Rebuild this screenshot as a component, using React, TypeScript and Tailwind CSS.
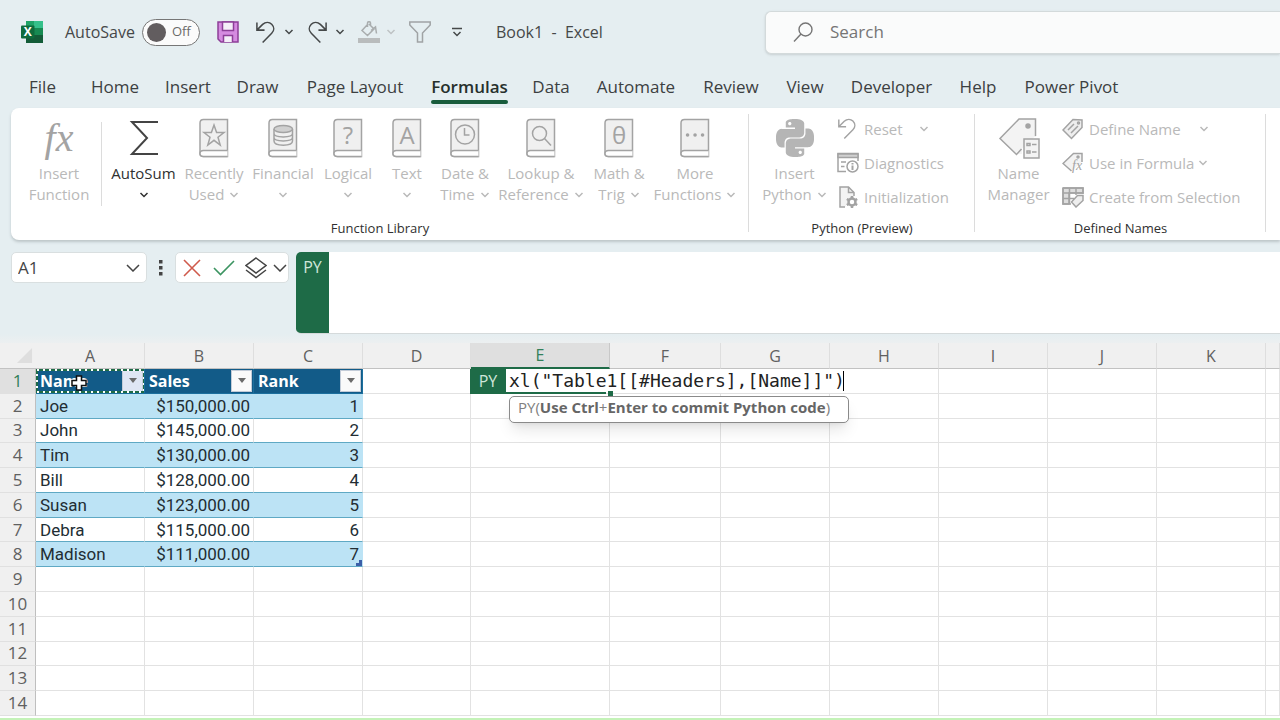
import { useState, type ReactNode } from "react";
import { SiPython } from "react-icons/si";

const tabs = [
  { name: "File", width: "w-[75px]" },
  { name: "Home", width: "w-[70px]" },
  { name: "Insert", width: "w-[76px]" },
  { name: "Draw", width: "w-[63px]" },
  { name: "Page Layout", width: "w-[132px]" },
  { name: "Formulas", width: "w-[97px]" },
  { name: "Data", width: "w-[66px]" },
  { name: "Automate", width: "w-[104px]" },
  { name: "Review", width: "w-[86px]" },
  { name: "View", width: "w-[62px]" },
  { name: "Developer", width: "w-[111px]" },
  { name: "Help", width: "w-[62px]" },
  { name: "Power Pivot", width: "w-[125px]" },
];

const columns = [
  { name: "A", width: "w-[109px]" },
  { name: "B", width: "w-[109px]" },
  { name: "C", width: "w-[109px]" },
  { name: "D", width: "w-[108px]" },
  { name: "E", width: "w-[139px]" },
  { name: "F", width: "w-[111px]" },
  { name: "G", width: "w-[109px]" },
  { name: "H", width: "w-[109px]" },
  { name: "I", width: "w-[109px]" },
  { name: "J", width: "w-[109px]" },
  { name: "K", width: "w-[109px]" },
  { name: "", width: "w-auto" },
];

const people = [
  ["Joe", "$150,000.00", "1"],
  ["John", "$145,000.00", "2"],
  ["Tim", "$130,000.00", "3"],
  ["Bill", "$128,000.00", "4"],
  ["Susan", "$123,000.00", "5"],
  ["Debra", "$115,000.00", "6"],
  ["Madison", "$111,000.00", "7"],
];

function Chevron({ className = "" }: { className?: string }) {
  return (
    <svg viewBox="0 0 10 6" className={`inline-block h-[6px] w-[10px] shrink-0 ${className}`}>
      <path d="M1.5 1l3.5 3.5L8.500 1" fill="none" stroke="currentColor" strokeWidth="1.5" />
    </svg>
  );
}

function Undo({ className = "" }: { className?: string }) {
  return (
    <svg viewBox="0 0 22 24" className={className} fill="none" stroke="currentColor" strokeWidth="1.6">
      <path d="M2 1.500V9.500H10M2.500 9L8 3.500C11 .8 15 .8 17.500 3.300C20.300 6.200 20.300 10 17.500 12.800L8 22.500" />
    </svg>
  );
}

function Book({ children }: { children?: ReactNode }) {
  return (
    <svg viewBox="0 0 30 40" className="h-10 w-[30px]" fill="none" stroke="#a3a3a3" strokeWidth="1.5">
      <path d="M4.500 1.500H28.500V38.500H4.500C2.500 38.500 1 37.500 1 35.500V5C1 3 2.500 1.500 4.500 1.500Z" fill="#f0f0f0" />
      <path d="M28.500 32.500H4.500C2.500 32.500 1 33.500 1 35.500S2.500 38.500 4.500 38.500H28.500" fill="#fff" />
      {children}
    </svg>
  );
}

function Glyph({ children }: { children: string }) {
  return (
    <text x="15" y="26" textAnchor="middle" fill="#a3a3a3" stroke="none" fontSize="24" fontFamily="Open Sans, sans-serif">
      {children}
    </text>
  );
}

type BigButtonProps = {
  icon: ReactNode;
  first: string;
  second?: string;
  menu?: boolean;
  width: string;
  color?: string;
};

function BigButton({ icon, first, second, menu, width, color = "text-[#b9b9b9]" }: BigButtonProps) {
  return (
    <button className={`flex shrink-0 flex-col items-center pt-[6px] text-[15px] leading-[21px] whitespace-nowrap ${width} ${color}`}>
      <span className="mb-[5px] flex h-10 items-center justify-center">{icon}</span>
      <span>{first}</span>
      <span className="flex h-[21px] items-center gap-[5px]">
        {second}
        {menu && <Chevron />}
      </span>
    </button>
  );
}

function SmallButton({ icon, label, menu }: { icon: ReactNode; label: string; menu?: string }) {
  return (
    <button className="flex h-[34px] items-center gap-1 text-[15px] whitespace-nowrap text-[#b9b9b9]">
      <span className="flex w-[23px]">{icon}</span>
      {label}
      {menu && <Chevron className={menu} />}
    </button>
  );
}

function Group({ caption, children, width }: { caption: string; children: ReactNode; width: string }) {
  return (
    <section className={`relative flex shrink-0 flex-col ${width}`} aria-label={caption}>
      <div className="flex h-[106px]">{children}</div>
      <h2 className="text-center text-[13px] leading-5 text-[#303030]">{caption}</h2>
      <span className="absolute top-[2px] right-0 h-[118px] w-px bg-[#dcdcdc]" />
    </section>
  );
}

function TitleBar() {
  const [autoSave, setAutoSave] = useState(false);
  return (
    <header className="flex h-16 items-center pl-[21px] text-[16px] text-[#454849]">
      <svg viewBox="0 0 22 22" className="h-[22px] w-[22px] shrink-0">
        <path d="M5 0H22V22H5Z" fill="#1b8a55" />
        <path d="M13 0H22V7H13Z" fill="#35c08a" />
        <path d="M5 0H13V7H5Z" fill="#1fa367" />
        <path d="M13 7H22V14H13Z" fill="#178a52" />
        <path d="M5 14H22V22H5Z" fill="#135c38" />
        <rect y="4.500" width="13.500" height="13" rx="1" fill="#0e6b3c" />
        <text x="6.700" y="15.300" textAnchor="middle" fontSize="12" fontWeight="700" fill="#fff" fontFamily="Open Sans, sans-serif">X</text>
      </svg>
      <label className="ml-[22px] flex w-[135px] shrink-0 items-center justify-between">
        AutoSave
        <span className="relative flex h-[27px] w-[58px] items-center rounded-full border border-[#767676] bg-[#fbfbfb] px-1">
          <input
            type="checkbox"
            role="switch"
            checked={autoSave}
            onChange={(e) => setAutoSave(e.target.checked)}
            className="absolute inset-0 opacity-0"
          />
          <span className="h-[19px] w-[19px] rounded-full bg-[#625d5f]" />
          <span className="ml-[6px] text-[13px] text-[#6a6a6a]">{autoSave ? "On" : "Off"}</span>
        </span>
      </label>
      <button aria-label="Save" className="ml-[17px] shrink-0">
        <svg viewBox="0 0 22 22" className="h-[22px] w-[22px]" stroke="#8d3f98" strokeWidth="1.5">
          <path d="M1 1H21V21H4L1 18Z" fill="#d58be0" />
          <path d="M5.500 1H16.500V9.500H5.500Z" fill="#f4eef8" />
          <path d="M6.500 21V14.500H15.500V21" fill="#f4eef8" />
        </svg>
      </button>
      <button aria-label="Undo" className="ml-4 shrink-0">
        <Undo className="h-[23px] w-[21px]" />
      </button>
      <button aria-label="Undo history" className="ml-2 flex shrink-0">
        <Chevron />
      </button>
      <button aria-label="Redo" className="ml-[13px] shrink-0">
        <Undo className="h-[23px] w-[21px] -scale-x-100" />
      </button>
      <button aria-label="Redo history" className="ml-[7px] flex shrink-0">
        <Chevron />
      </button>
      <button aria-label="Fill color" className="ml-[13px] shrink-0 text-[#a9adae]">
        <svg viewBox="0 0 22 22" className="h-[22px] w-[22px]" fill="none" stroke="currentColor" strokeWidth="1.500">
          <path d="M10 3L4 9.500L9.500 14.500L16 8L11 3M9.500 6V2C9.500 .3 12.500 .3 12.500 2V5M13 9.500L17.500 6L18.500 12.500" />
          <path d="M0 17H22V22H0Z" fill="#b9bcbd" stroke="none" />
        </svg>
      </button>
      <button aria-label="Fill color menu" className="ml-[6px] flex shrink-0 text-[#bec2c4]">
        <Chevron />
      </button>
      <button aria-label="Filter" className="ml-[13px] shrink-0 text-[#a0a3a5]">
        <svg viewBox="0 0 22 22" className="h-[22px] w-[22px]" fill="none" stroke="currentColor" strokeWidth="1.500">
          <path d="M.8 1H21.200V4L13.500 12V21H8.500V12L.8 4Z" />
        </svg>
      </button>
      <button aria-label="Customize toolbar" className="ml-[21px] shrink-0">
        <svg viewBox="0 0 10 10" className="h-[10px] w-[10px]" fill="none" stroke="currentColor" strokeWidth="1.500">
          <path d="M0 1.500H10M1.500 5L5 8.500L8.500 5" />
        </svg>
      </button>
      <h1 className="ml-[34px] w-[269px] shrink-0 whitespace-pre">Book1  -  Excel</h1>
      <label className="flex h-[43px] min-w-0 flex-1 items-center rounded-l-md border border-r-0 border-[#d3dadb] bg-[#fafbfb] pl-[27px] text-[#757575] shadow-sm">
        <svg viewBox="0 0 20 20" className="h-5 w-5 shrink-0" fill="none" stroke="currentColor" strokeWidth="1.400">
          <circle cx="12.500" cy="7.500" r="6.500" />
          <path d="M8 12L1 19.500" />
        </svg>
        <input type="search" aria-label="Search" placeholder="Search" className="ml-[17px] min-w-0 flex-1 bg-transparent text-[17px] outline-none placeholder:text-[#757575]" />
      </label>
    </header>
  );
}

function Tabs() {
  return (
    <nav className="flex h-11 pl-[5px] text-[17px] text-[#3c4041]">
      {tabs.map((tab) => (
        <button key={tab.name} className={`flex shrink-0 flex-col items-center pt-[11px] leading-6 whitespace-nowrap ${tab.width}`}>
          {tab.name === "Formulas" ? (
            <span className="font-semibold text-[#27302c]">
              {tab.name}
              <span className="mt-px block h-1 rounded-full bg-[#185c3c]" />
            </span>
          ) : (
            tab.name
          )}
        </button>
      ))}
    </nav>
  );
}

function Ribbon() {
  return (
    <div className="ml-[11px] flex h-[132px] overflow-hidden rounded-l-lg bg-white pt-1 shadow-[0_2px_3px_#bcc5c8]">
      <Group caption="Function Library" width="w-[738px]">
        <BigButton
          width="w-[96px]"
          first="Insert"
          second="Function"
          icon={<span className="font-['Liberation_Serif',serif] text-[40px] leading-10 text-[#a3a3a3] italic">fx</span>}
        />
        <span className="mt-[10px] -ml-[6px] h-[84px] w-px shrink-0 bg-[#dcdcdc]" />
        <BigButton
          width="w-[79px] pl-1"
          color="text-[#303030]"
          first="AutoSum"
          menu
          icon={
            <svg viewBox="0 0 30 36" className="h-9 w-[30px]" fill="none" stroke="#444" strokeWidth="2">
              <path d="M29 2H3L18 18L3 34H29" />
            </svg>
          }
        />
        <BigButton
          width="w-[66px]"
          first="Recently"
          second="Used"
          menu
          icon={
            <Book>
              <path d="M15 7L17.600 14.500H25L19 19.200L21.200 27L15 22.300L8.800 27L11 19.200L5 14.500H12.400Z" />
            </Book>
          }
        />
        <BigButton
          width="w-[72px]"
          first="Financial"
          menu
          icon={
            <Book>
              <path d="M6 11V23C6 28.500 24.500 28.500 24.500 23V11M6 15.500C6 20 24.500 20 24.500 15.500M6 19.500C6 24 24.500 24 24.500 19.500" />
              <ellipse cx="15.250" cy="11" rx="9.250" ry="3.500" fill="#d0d0d0" />
            </Book>
          }
        />
        <BigButton width="w-[58px]" first="Logical" menu icon={<Book><Glyph>?</Glyph></Book>} />
        <BigButton width="w-[60px]" first="Text" menu icon={<Book><Glyph>A</Glyph></Book>} />
        <BigButton
          width="w-[56px]"
          first="Date &"
          second="Time"
          menu
          icon={
            <Book>
              <circle cx="15" cy="16.500" r="9.500" />
              <path d="M14.500 10V17H19.500" />
            </Book>
          }
        />
        <BigButton
          width="w-[96px]"
          first="Lookup &"
          second="Reference"
          menu
          icon={
            <Book>
              <circle cx="13.500" cy="15.500" r="7" />
              <path d="M18.500 20.500L25 27.500" />
            </Book>
          }
        />
        <BigButton width="w-[60px]" first="Math &" second="Trig" menu icon={<Book><Glyph>θ</Glyph></Book>} />
        <BigButton
          width="w-[92px]"
          first="More"
          second="Functions"
          menu
          icon={
            <Book>
              <path d="M7.500 17h.1M15 17h.1M22.500 17h.1" strokeWidth="3.500" strokeLinecap="round" />
            </Book>
          }
        />
      </Group>

      <Group caption="Python (Preview)" width="w-[226px]">
        <BigButton width="w-[88px] pl-[3px]" first="Insert" second="Python" menu icon={<SiPython size={38} color="#b5b5b5" />} />
        <div className="flex flex-col">
          <SmallButton label="Reset" menu="ml-[12px]" icon={<Undo className="h-[22px] w-[20px] text-[#a3a3a3]" />} />
          <SmallButton
            label="Diagnostics"
            icon={
              <svg viewBox="0 0 22 22" className="h-[22px] w-[22px]" fill="none" stroke="#a3a3a3" strokeWidth="1.500">
                <path d="M9 19.500H1V1.500H21V9" />
                <path d="M1 2H21V5.500H1Z" fill="#d0d0d0" />
                <path d="M4 10H9M4 14.500H7.500" />
                <circle cx="15.500" cy="14.500" r="5.500" />
                <path d="M15.500 13.500V18M15.500 11V12.500" strokeWidth="2" />
              </svg>
            }
          />
          <SmallButton
            label="Initialization"
            icon={
              <svg viewBox="0 0 22 22" className="h-[22px] w-[22px]" fill="none" stroke="#a3a3a3" strokeWidth="1.500">
                <path d="M8 21H3V1H11.500L17 6.500V10" fill="#f3f3f3" />
                <path d="M11.500 1V6.500H17" />
                <circle cx="15" cy="16" r="3.500" strokeWidth="2.500" />
                <path d="M15 10V12.500M15 19.500V22M9.800 13L12 14.200M18 17.800L20.200 19M9.800 19L12 17.800M18 14.200L20.200 13" strokeWidth="2.500" />
              </svg>
            }
          />
        </div>
      </Group>

      <Group caption="Defined Names" width="w-[291px]">
        <BigButton
          width="w-[87px]"
          first="Name"
          second="Manager"
          icon={
            <svg viewBox="0 0 42 42" className="h-[42px] w-[42px]" fill="#f3f3f3" stroke="#a3a3a3" strokeWidth="1.500">
              <path d="M24 20V37H18L2 21L21 2H38V20" stroke="none" />
              <path d="M23.500 32L18.500 37.500L2 21.500L21 2H37.500V19" />
              <circle cx="30" cy="9" r="2" fill="#a3a3a3" />
              <path d="M26 22H41V41H26Z" />
              <path d="M29 26.500H32V28.500H29ZM29 34H32V36H29ZM34 27.500H38.500M34 35H38.500" />
            </svg>
          }
        />
        <div className="flex flex-col">
          <SmallButton
            label="Define Name"
            menu="ml-[14px]"
            icon={
              <svg viewBox="0 0 22 22" className="h-[22px] w-[22px]" fill="#eee" stroke="#a3a3a3" strokeWidth="1.500">
                <path d="M1 12L11 1.500L20 2V9.500L9.500 20.500Z" />
                <path d="M6 12L12 6M9 15L16 8" />
                <circle cx="16.500" cy="5" r="1" />
              </svg>
            }
          />
          <SmallButton
            label="Use in Formula"
            menu="ml-0"
            icon={
              <svg viewBox="0 0 22 22" className="h-[22px] w-[22px]" fill="#f3f3f3" stroke="#a3a3a3" strokeWidth="1.500">
                <path d="M9.500 19L1 11.500L11.500 1.500H20V10" />
                <circle cx="16" cy="5" r="1" />
                <text x="10" y="18" fontSize="14" fontStyle="italic" fill="#a3a3a3" stroke="none" fontFamily="Liberation Serif, serif">fx</text>
              </svg>
            }
          />
          <SmallButton
            label="Create from Selection"
            icon={
              <svg viewBox="0 0 22 22" className="h-[22px] w-[22px]" fill="none" stroke="#a3a3a3" strokeWidth="1.500">
                <path d="M1 2H21V7H7V18H1Z" fill="#ddd" />
                <path d="M1 2H21V8M1 2V18H9M1 7H21M1 12.500H12M7.500 2V18M14 2V9" />
                <path d="M9.500 16L15.500 9.500H21V14.500L14 21Z" fill="#eee" />
              </svg>
            }
          />
        </div>
      </Group>
    </div>
  );
}

function FormulaBar() {
  return (
    <div className="mt-3 flex h-[82px] items-start">
      <label className="ml-[11px] flex h-[31px] w-[136px] shrink-0 items-center rounded-[5px] border border-[#d9dfe0] bg-white pr-[6px] pl-[6px]">
        <input aria-label="Name box" defaultValue="A1" className="w-0 min-w-0 flex-1 text-[17px] text-[#454545] outline-none" />
        <svg viewBox="0 0 14 8" className="h-2 w-[14px]" fill="none" stroke="#444" strokeWidth="1.500">
          <path d="M1 1L7 7L13 1" />
        </svg>
      </label>
      <svg viewBox="0 0 4 16" className="mt-2 ml-3 h-4 w-1 shrink-0" fill="#444">
        <path d="M0 0H3.500V3.500H0ZM0 6H3.500V9.500H0ZM0 12H3.500V15.500H0Z" />
      </svg>
      <div className="ml-3 flex h-[31px] w-[114px] shrink-0 items-center rounded-[5px] border border-[#d9dfe0] bg-white pl-[7px]">
        <button aria-label="Cancel">
          <svg viewBox="0 0 18 18" className="h-[18px] w-[18px]" stroke="#cf5a4c" strokeWidth="1.600">
            <path d="M1 1L17 17M17 1L1 17" />
          </svg>
        </button>
        <button aria-label="Enter" className="ml-3">
          <svg viewBox="0 0 22 16" className="h-4 w-[22px]" fill="none" stroke="#3c9461" strokeWidth="1.600">
            <path d="M1 8L7.500 14.500L21 1" />
          </svg>
        </button>
        <button aria-label="Python output" className="ml-[10px] flex items-center gap-[6px]">
          <svg viewBox="0 0 22 22" className="h-[22px] w-[22px]" fill="none" stroke="#444" strokeWidth="1.500">
            <path d="M11 1L21 8.500L11 16L1 8.500ZM1 13L11 20.500L21 13" />
          </svg>
          <svg viewBox="0 0 14 8" className="h-2 w-[14px] shrink-0" fill="none" stroke="#444" strokeWidth="1.500">
            <path d="M1 1L7 7L13 1" />
          </svg>
        </button>
      </div>
      <div className="ml-[7px] flex h-full min-w-0 flex-1 overflow-hidden rounded-l-[5px] border-b border-[#d5dadb] bg-white">
        <span className="w-[33px] shrink-0 bg-[#1e6b47] pt-1 text-center text-[16px] leading-[22px] text-[#cfe6d9]">PY</span>
        <textarea aria-label="Formula bar" className="min-w-0 flex-1 resize-none outline-none" />
      </div>
    </div>
  );
}

function HeaderCell({ name, active }: { name: string; active?: boolean }) {
  return (
    <td className="relative border-r border-b border-[#1b6f9e] bg-[#125b88] p-0">
      <div className="flex items-center justify-between pr-px pl-1">
        <span className="text-[16px] font-bold text-white">{name}</span>
        <button
          aria-label={`Filter ${name}`}
          className={`flex h-[22px] w-[21px] items-center justify-center border border-[#c3ccd8] ${active ? "bg-[#dfe6f4]" : "bg-[#fafafa]"}`}
        >
          <svg viewBox="0 0 8 5" className="h-[5px] w-2" fill="#6b6b6b">
            <path d="M0 0H8L4 5Z" />
          </svg>
        </button>
      </div>
      {active && (
        <>
          <svg className="absolute inset-0 h-full w-full" fill="none" strokeWidth="2">
            <rect x="1" y="1" width="107" height="22" stroke="#1e6b47" />
            <rect x="1" y="1" width="107" height="22" stroke="#fff" strokeDasharray="2 4" />
          </svg>
          <svg viewBox="0 0 16 16" className="absolute top-[6px] left-[35px] h-4 w-4">
            <path d="M5.500 1H10.500V5.500H15V10.500H10.500V15H5.500V10.500H1V5.500H5.500Z" fill="#fff" stroke="#111" strokeWidth="1.500" />
          </svg>
        </>
      )}
    </td>
  );
}

function CellEditor() {
  return (
    <div className="absolute top-0 left-[-1px] z-10">
      <div className="flex h-[25px] w-[376px] bg-white">
        <span className="w-9 shrink-0 bg-[#1e6b47] text-center text-[16px] leading-[25px] text-[#cfe6d9]">PY</span>
        <input
          aria-label="Cell formula"
          defaultValue={'xl("Table1[[#Headers],[Name]]")'}
          className="min-w-0 flex-1 border-b border-[#e0e0e0] pl-[3px] font-['DejaVu_Sans_Mono',monospace] text-[18px] leading-6 text-[#222] outline-none"
        />
        <span className="absolute top-[2px] right-[2px] h-5 w-px bg-black" />
        <span className="absolute bottom-0 left-9 h-[2px] w-[100px] bg-[#1e6b47]" />
        <span className="absolute bottom-[-2px] left-[138px] h-[5px] w-[5px] bg-[#1e6b47]" />
      </div>
      <div role="tooltip" className="absolute top-[27px] left-[39px] h-[27px] w-[340px] rounded-[5px] border border-[#8a8a8a] bg-white pl-2 text-[15px] leading-[21px] whitespace-nowrap text-[#808080] shadow-lg">
        PY(<b className="font-bold text-[#666]">Use Ctrl</b>+<b className="font-bold text-[#666]">Enter to commit Python code</b>)
      </div>
    </div>
  );
}

function Sheet() {
  const rows = Array.from({ length: 14 }, (_, i) => i + 1);
  const line = "border-r border-b border-[#e2e2e2]";
  return (
    <div className="overflow-hidden bg-gradient-to-b from-[#e5eef1] to-[#f0f0f0] to-[14px] pt-[9px]">
      <table className="h-[373px] w-full table-fixed border-separate border-spacing-0 bg-white text-[17px] leading-[22px]">
        <colgroup>
          <col className="w-9" />
          {columns.map((col) => (
            <col key={col.name} className={col.width} />
          ))}
        </colgroup>
        <thead>
          <tr className="h-[26px] bg-[#f0f0f0] text-[16px] text-[#606060]">
            <th className="border-b border-[#c2c2c2] p-0">
              <svg viewBox="0 0 18 18" className="ml-4 h-[17px] w-[17px]" fill="#dedede">
                <path d="M17 1V17H1Z" />
              </svg>
            </th>
            {columns.map((col) => (
              <th
                key={col.name}
                className={`border-r p-0 font-normal ${
                  col.name === "E"
                    ? "border-b-2 border-r-[#c8c8c8] border-b-[#1e6b47] bg-[#dfdfdf] text-[#33805a]"
                    : "border-b border-r-[#dedede] border-b-[#c2c2c2]"
                }`}
              >
                {col.name}
              </th>
            ))}
          </tr>
        </thead>
        <tbody>
          {rows.map((row) => (
            <tr key={row}>
              <th
                className={`border-r border-b border-r-[#bfbfbf] border-b-[#e0e0e0] p-0 text-[17px] font-normal ${
                  row === 1 ? "bg-[#e0e0e0] text-[#33805a]" : "bg-[#f0f0f0] text-[#606060]"
                }`}
              >
                {row}
              </th>
              {columns.map((col, i) => {
                if (row === 1 && i < 3) {
                  return <HeaderCell key={col.name} name={["Name", "Sales", "Rank"][i]} active={i === 0} />;
                }
                if (row > 1 && row < 9 && i < 3) {
                  const band = row % 2 === 0 ? "bg-[#bce3f5] border-r-[#bce3f5]" : "border-r-[#e2e2e2]";
                  return (
                    <td
                      key={col.name}
                      className={`relative border-r border-b border-b-[#5fa9c4] pr-[3px] pl-1 py-0 font-[Roboto,sans-serif] text-[#222d33] ${band} ${i > 0 ? "text-right" : ""}`}
                    >
                      {people[row - 2][i]}
                      {row === 8 && i === 2 && (
                        <svg viewBox="0 0 6 6" className="absolute right-0 bottom-0 h-[6px] w-[6px]" fill="#3c5fa8">
                          <path d="M6 0V6H0V3H3V0Z" />
                        </svg>
                      )}
                    </td>
                  );
                }
                return (
                  <td key={col.name} className={`relative p-0 ${line}`}>
                    {row === 1 && col.name === "E" && <CellEditor />}
                  </td>
                );
              })}
            </tr>
          ))}
        </tbody>
      </table>
      <div className="h-1 border-b-2 border-[#c4f2b8] bg-white" />
    </div>
  );
}

export default function App() {
  return (
    <main className="overflow-hidden bg-[#e5eef1] font-['Open_Sans',sans-serif]">
      <TitleBar />
      <Tabs />
      <Ribbon />
      <FormulaBar />
      <Sheet />
    </main>
  );
}
